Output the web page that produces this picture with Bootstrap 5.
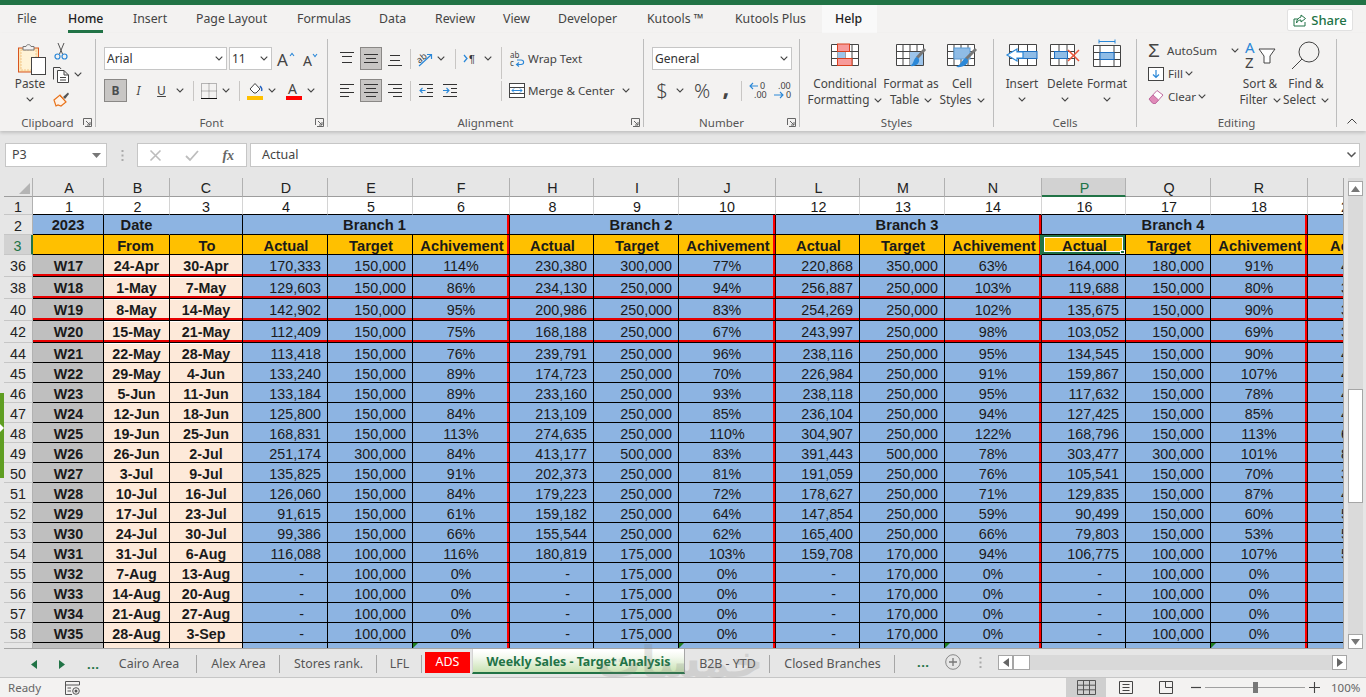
<!DOCTYPE html>
<html lang="en">
<head>
<meta charset="utf-8">
<title>Weekly Sales - Target Analysis</title>
<link href="https://cdn.jsdelivr.net/npm/bootstrap@5.3.0/dist/css/bootstrap.min.css" rel="stylesheet">
<style>
html,body{height:697px;overflow:hidden}
body{width:1366px;background:#f3f2f1;font-family:"Noto Sans","Open Sans",sans-serif;font-size:12px;color:#444;position:relative}
svg{overflow:visible}
.topbar{height:5px;background:#217346}
.tabstrip{height:28px;background:#f3f2f1;display:grid;grid-template-columns:51px 65px 63px 101px 82px 56px 68px 55px 89px 88px 100px 57px 1fr;padding-left:17px;font-size:12.3px;color:#444;white-space:nowrap;line-height:27px}
.hometab{display:inline-block;height:28px;border-bottom:3px solid #217346;color:#222;font-weight:500}
.helptab{margin-left:-13px;padding-left:13px;width:55px;background:#f9f9f9;color:#222;font-weight:500}
.sharebtn{grid-column:13;grid-row:1;justify-self:end;width:66px;height:22px;margin:4px 13px 0 0;background:#fff;border:1px solid #e1e1e1;border-radius:2px;color:#217346;font-weight:500;font-size:13px;line-height:20px}
.rbn{height:98px;background:#f3f2f1;display:flex;position:relative;z-index:2;box-shadow:0 2px 3px rgba(0,0,0,.16)}
.grp{margin-top:6px;height:88px;border-right:1px solid #bdbdbd;flex:none;position:relative;display:flex;flex-direction:column}
.g-clip{width:96px}.g-font{width:232px}.g-align{width:316px}.g-num{width:156px}.g-sty{width:194px}.g-cell{width:143px}.g-edit{width:200px}
.g-main{height:76px;flex:none;display:flex}
.g-lab{line-height:16px;text-align:center;font-size:11.5px;color:#555;white-space:nowrap}
.launch{position:absolute;right:3px;bottom:0;width:9px;height:9px}
.rows2{padding-top:8px;display:flex;flex-direction:column;gap:9px}
.g-font .rows2{padding-left:8px}.g-num .rows2{padding-left:8px}
.tr{display:flex;align-items:center;height:23px;white-space:nowrap}
.tool{display:flex;align-items:center;justify-content:center;flex:none;height:23px}
.tool.on{background:#c8c6c4;border:1px solid #8a8886}
.vsep{width:1px;height:20px;background:#c8c6c4;flex:none}
.vsep.lng{height:32px;align-self:flex-start}
.s2{width:2px;flex:none}.s3{width:3px;flex:none}.s4{width:4px;flex:none}.s5{width:5px;flex:none}.s6{width:6px;flex:none}.s7{width:7px;flex:none}.s8{width:8px;flex:none}.s9{width:9px;flex:none}.s10{width:10px;flex:none}.s14{width:14px;flex:none}.s16{width:16px;flex:none}.s18{width:18px;flex:none}.s20{width:20px;flex:none}.s21{width:21px;flex:none}.s22{width:22px;flex:none}.s23{width:23px;flex:none}.s44{width:44px;flex:none}.s93{width:93px;flex:none}.s123{width:123px;flex:none}.s43{width:43px;flex:none}.s140{width:140px;flex:none}.s15{width:15px;flex:none}.s13{width:13px;flex:none}.s11{width:11px;flex:none}.s40{width:40px;flex:none}.s100{width:100px;flex:none}
.combo{height:23px;background:#fff;border:1px solid #c6c6c6;display:flex;align-items:center;justify-content:space-between;padding:0 3px 0 2px;color:#333;font-size:12px}
.cv{width:8px;height:5px;display:block;flex:none}
.lbl{font-size:11.6px;color:#444;white-space:nowrap}
.bigrow{display:grid;width:100%}
.g-sty .bigrow{grid-template-columns:90px 42px 60px}
.g-cell .bigrow{grid-template-columns:56px 30px 54px}
.bigb{display:flex;flex-direction:column;align-items:center;white-space:nowrap;line-height:16px;font-size:11.8px;color:#444}
.bigb-ic{height:36px;flex:none;display:flex;align-items:flex-start;justify-content:center;padding-top:4px}
.bigb .cv{margin-top:6px}
.inl{display:inline-block;width:8px;height:5px;margin-left:2px;vertical-align:middle}
.clip-big{width:46px;margin-left:7px;flex:none}
.clip-small{padding-top:2px;display:flex;flex-direction:column;gap:5px}
.clip-small>div{height:19px;display:flex;align-items:center}
.edit-left{width:103px;flex:none;padding:1px 0 0 11px;display:flex;flex-direction:column;gap:2px}
.edit-left>div{height:21px;display:flex;align-items:center;white-space:nowrap}
.sigma{font-size:19px;color:#444;width:19px;line-height:20px;font-family:"Liberation Sans",sans-serif}
.tail{flex:1;position:relative}
.upcv{position:absolute;right:9px;bottom:7px;width:10px;height:6px}
.fbar{height:47px;background:#e6e6e6;padding:12px 6px 11px 5px;display:flex;align-items:stretch;font-size:12.5px;color:#444}
.namebox{width:102px;background:#fff;border:1px solid #c6c6c6;display:flex;align-items:center;justify-content:space-between;padding:0 5px 0 6px}
.namebox svg{width:9px;height:5px}
.fdots{width:30px;display:flex;align-items:center;justify-content:center}
.fxbox{width:110px;background:#fff;border:1px solid #c6c6c6;display:flex;align-items:center;justify-content:space-around;padding:0}
.fxlab{font-family:"Liberation Serif",serif;font-style:italic;font-weight:700;font-size:14px;color:#666}
.finput{flex:1;margin-left:3px;background:#fff;border:1px solid #c6c6c6;display:flex;align-items:center;justify-content:space-between;padding:0 3px 0 11px}
.gridzone{height:471px;display:flex;background:#e6e6e6}
.lstrip{width:4px;flex:none;padding-top:215px}
.lgreen{height:85px;background:#5f9e22;display:flex;align-items:center}
.lgreen svg{width:4px;height:8px;margin-top:-16px}
.sheetclip{width:1340px;flex:none;overflow:hidden;border-right:1px solid #a6a6a6;border-bottom:1px solid #a6a6a6;background:#fff}
.xl{table-layout:fixed;border-collapse:separate;border-spacing:0;width:1392px;font-family:"Liberation Sans",Arial,sans-serif;font-size:14.3px;color:#1a1a1a;line-height:14px}
.xl td,.xl th{padding:3px 6px 0 4px;height:20px;border-right:1px solid #000;border-bottom:1px solid #000;background:#8db4e2;text-align:right;font-weight:400;white-space:nowrap;overflow:hidden}
.xl td.cn{text-align:center;padding-right:4px}
.xl td.dash{padding-right:23px}
.xl td.wk{background:#bfbfbf;font-weight:700;text-align:center;padding-left:5px;padding-right:4px}
.xl td.pch{background:#fde9d9;font-weight:700;text-align:center;padding-right:4px}
.xl td.og{background:#ffc000;font-weight:700;text-align:center;font-size:14.7px;padding-left:6px;padding-right:4px}
.xl td.og:nth-child(3){padding-left:2px}
.xl td.bh{font-weight:700;text-align:center;font-size:14.7px;padding-right:4px;padding-top:0}
.xl td.bh.rv{padding-right:7px}
.xl td.peek{text-align:left;padding-left:33px}
.xl tr.hr>*{height:22px}
.xl tr.hr td{padding-top:0}
.xl .rv{box-shadow:inset -2px 0 0 #f00;border-right-color:#300}
.xl tr.hr td{box-shadow:inset 0 -2px 0 #e80000;border-bottom-color:#000}
.xl tr.hr td.rv{box-shadow:inset 0 -2px 0 #e80000,inset -2px 0 0 #f00}
.xl tr.hr+tr td.pch{box-shadow:inset 0 1px 0 #fff}
.xl tr.hr+tr.hr td.pch{box-shadow:inset 0 1px 0 #fff,inset 0 -2px 0 #e80000}
.xl th.rh,.xl th.ch{background:#e6e6e6;color:#222;text-align:center;border-right:1px solid #b1b1b1;border-bottom:1px solid #c6c6c6;padding:3px 0 0}
.xl tr.hr th.rh{padding-top:0}
.xl thead th.ch{height:19px;border-bottom-color:#9d9d9d;padding-top:2px}
.xl thead th.ch:not(:nth-child(3n+1)){padding-left:2px}
.xl th.sel{background:#d2d2d2;color:#217346}
.xl thead th.sel{border-bottom:2px solid #217346}
.xl th.rh.sel{border-right:2px solid #217346}
.xl th.corner{position:relative}
.xl th.corner::after{content:"";position:absolute;right:2px;bottom:2px;border-style:solid;border-width:0 0 11px 11px;border-color:transparent transparent #b4b4b4 transparent}
.xl tr.r1 td{background:#fff;height:18px;text-align:center;border-right-color:#d4d4d4;padding:3px 4px 0}
.xl tr.r1 td:not(:nth-child(3n+1)){padding-left:6px}
.xl tr.r1 td.peek{text-align:left;padding-left:33px}
.xl tr.r1 th.rh{height:18px}
.xl td.nob{border-right-color:transparent}
.xl td.cur{position:relative;box-shadow:inset 0 0 0 2px #217346,inset 0 0 0 3px #fff,-2px 0 0 #217346}
.xl td.cur::after{content:"";position:absolute;right:0;bottom:0;width:5px;height:4px;background:#217346;border:1px solid #fff}
.xl td.err{position:relative}
.xl td.err::before{content:"";position:absolute;left:0;top:0;border-style:solid;border-width:5px 5px 0 0;border-color:#1e7d1e transparent transparent transparent}
.vs{width:22px;flex:none;padding:0 3px 0 4px;display:flex;justify-content:center}
.vs-in{width:15px;background:#dadada;display:flex;flex-direction:column;align-items:center;padding-top:3px}
.sb{width:15px;height:15px;background:#fff;border:1px solid #a6a6a6;flex:none;display:flex;align-items:center;justify-content:center}
.sb svg{width:9px;height:6px}
.vthumb{width:15px;height:114px;margin-top:193px;background:#fff;border:1px solid #a6a6a6;flex:none}
.vend{margin-top:auto}
.sheetbar{height:29px;background:#e6e6e6;border-bottom:1px solid #c6c6c6;display:grid;grid-template-columns:105px 92px 83px 97px 45px 3px 45px 2px 213px 85px 125px 1fr;font-size:12.4px;color:#555;white-space:nowrap}
.stab{display:flex;align-items:center;justify-content:center;position:relative;height:28px;padding-top:2px}
.stab.sp::after{content:"";position:absolute;right:0;top:6px;height:18px;width:1px;background:#a6a6a6}
.navz{display:flex;align-items:center;padding-left:31px;justify-content:flex-start}
.navz svg{width:6px;height:9px}
.gdots{color:#217346;font-weight:700;font-size:13px;line-height:14px;letter-spacing:.5px}
.s-ads{background:#f00;color:#fff;margin-top:3px;height:21px;padding-top:0}
.s-act{background:linear-gradient(#fff 8%,#f4f9ef 35%,#c9e2b3);color:#217346;font-weight:700;height:25px;border-bottom:2px solid #217346;border-left:1px solid #d4d4d4;border-right:1px solid #a6a6a6;padding-top:3px}
.stail{display:flex;align-items:center;height:28px;padding-top:0;padding-bottom:2px}
.hs{width:349px;height:15px;flex:none;background:#d9d9d9;display:flex}
.hs .sb{width:15px}
.hs .sb svg{width:6px;height:9px}
.hthumb{width:17px;height:15px;background:#fff;border:1px solid #a6a6a6;flex:none}
.hend{margin-left:auto}
.statusb{height:19px;background:#f3f2f1;display:flex;align-items:center;padding-left:8px;color:#666;font-size:11.5px;white-space:nowrap;line-height:19px}
.sviews{margin-left:auto;display:flex;align-items:center;height:19px}
.vw{height:19px;width:40px;display:flex;align-items:center;justify-content:center;flex:none}
.vw.on{background:#cfcfcf}
.slid{width:100px;height:1px;background:#a0a0a0;position:relative;flex:none}
.slid::after{content:"";position:absolute;left:48px;top:-5px;width:5px;height:11px;background:#777}
.pctz{width:35px;color:#666;font-size:11.5px}
.wmark{position:absolute;left:590px;top:640px;width:180px;text-align:center;font-family:"DejaVu Sans",sans-serif;font-weight:700;font-size:44px;line-height:44px;color:#7c7c7c;opacity:.2;pointer-events:none;z-index:5}
</style>
</head>
<body>
<svg width="0" height="0" class="d-block">
<defs>
<symbol id="cv" viewBox="0 0 8 5"><path d="M.7.7 4 4 7.3.7" fill="none" stroke="#444" stroke-width="1.1"/></symbol>
<symbol id="lch" viewBox="0 0 9 9"><path d="M.5 7V.5H8.5V8.5H2M3 3 7 7M7 4V7H4" fill="none" stroke="#666"/></symbol>
<symbol id="altop" viewBox="0 0 14 18"><path d="M0 2.5H14M2 6.5H12M0 11.5H0" stroke="#333" fill="none"/><path d="M2 12.5H12" stroke="#333"/></symbol>
<symbol id="almid" viewBox="0 0 14 18"><path d="M0 4.5H14M2 8.5H12M0 12.5H14" stroke="#333" fill="none"/></symbol>
<symbol id="albot" viewBox="0 0 14 18"><path d="M2 5.5H12M2 10.5H12M0 15.5H14" stroke="#333" fill="none"/></symbol>
<symbol id="alleft" viewBox="0 0 14 14"><path d="M0 .5H14M0 4.5H9M0 8.5H14M0 12.5H9" stroke="#333" fill="none"/></symbol>
<symbol id="alcen" viewBox="0 0 14 14"><path d="M0 .5H14M2 4.5H12M0 8.5H14M2 12.5H12" stroke="#333" fill="none"/></symbol>
<symbol id="alright" viewBox="0 0 14 14"><path d="M0 .5H14M5 4.5H14M0 8.5H14M5 12.5H14" stroke="#333" fill="none"/></symbol>
<symbol id="tl" viewBox="0 0 6 9"><path d="M6 0V9L0 4.5Z"/></symbol>
<symbol id="tr" viewBox="0 0 6 9"><path d="M0 0V9L6 4.5Z"/></symbol>
<symbol id="tu" viewBox="0 0 9 6"><path d="M0 6H9L4.5 0Z" fill="#777"/></symbol>
<symbol id="td" viewBox="0 0 9 6"><path d="M0 0H9L4.5 6Z" fill="#777"/></symbol>
</defs>
</svg>

<div class="topbar"></div>

<div class="tabstrip">
<span>File</span><span><span class="hometab">Home</span></span><span>Insert</span><span>Page Layout</span><span>Formulas</span><span>Data</span><span>Review</span><span>View</span><span>Developer</span><span>Kutools ™</span><span>Kutools Plus</span><span class="helptab">Help</span><span>Power Pivot</span>
<div class="sharebtn d-flex align-items-center justify-content-center gap-1">
<svg width="14" height="14" viewBox="0 0 14 14"><path d="M1 6V13H12V9M1 6H5M8 2 12.5 5.5 8 9V7C6 7 4.5 8 3.5 10 3.5 7 5.5 4.5 8 4Z" fill="none" stroke="#217346"/></svg>Share</div>
</div>

<div class="rbn">
<!-- Clipboard -->
<div class="grp g-clip">
<div class="g-main">
<div class="clip-big bigb">
<div class="bigb-ic ps-1">
<svg width="28" height="32" viewBox="0 0 28 32"><rect x=".5" y="5" width="20" height="24" fill="#fbe6b8" stroke="#d8551f"/><rect x="3" y="7" width="15" height="20" fill="#fff3d6" stroke="#f3c78a" stroke-dasharray="2 1"/><path d="M5 7V3.5H8C8.5 1 12.5 1 13 3.5H16V7Z" fill="#f3f2f1" stroke="#777"/><rect x="13.5" y="14.5" width="14" height="17" fill="#fff" stroke="#444"/></svg>
</div>
<span>Paste</span><svg class="cv"><use href="#cv"/></svg>
</div>
<div class="clip-small">
<div><svg width="16" height="18" viewBox="0 0 16 18"><path d="M5 1 9.5 12M11 1 6.5 12" stroke="#555" fill="none"/><circle cx="4.5" cy="14.5" r="2.5" fill="none" stroke="#2b88d8" stroke-width="1.2"/><circle cx="11.5" cy="14.5" r="2.5" fill="none" stroke="#2b88d8" stroke-width="1.2"/></svg></div>
<div><svg width="16" height="16" viewBox="0 0 16 16"><path d="M.5 12.5V.5H7L8 2" fill="none" stroke="#444"/><path d="M4.5 3.5H11L15.5 8V15.5H4.5ZM11 3.5V8H15.5M7 10.5H13M7 13H13" fill="#fff" stroke="#444"/></svg><span class="s5"></span><svg class="cv"><use href="#cv"/></svg></div>
<div><svg width="17" height="16" viewBox="0 0 17 16"><path d="M1 9 7 4 13 11 8 15 5 14 3 15 2 12Z" fill="#fff2e6" stroke="#e8731c" stroke-width="1.2"/><path d="M7 5 12 10" stroke="#e8731c"/><path d="M10 6 15 1.5 16 3 12 8Z" fill="#555"/></svg></div>
</div>
</div>
<div class="g-lab">Clipboard</div>
<svg class="launch"><use href="#lch"/></svg>
</div>

<!-- Font -->
<div class="grp g-font">
<div class="g-main">
<div class="rows2">
<div class="tr">
<div class="combo s123"><span>Arial</span><svg class="cv"><use href="#cv"/></svg></div><span class="s2"></span>
<div class="combo s43"><span>11</span><svg class="cv"><use href="#cv"/></svg></div><span class="s5"></span>
<div class="tool s20"><svg width="20" height="20" viewBox="0 0 20 20"><text x="0" y="17" font-family="Noto Sans,sans-serif" font-size="17" fill="#444">A</text><path d="M13 7 15 4.5 17 7" fill="none" stroke="#2b88d8" stroke-width="1.1"/></svg></div><span class="s3"></span>
<div class="tool s20"><svg width="20" height="20" viewBox="0 0 20 20"><text x="3" y="17" font-family="Noto Sans,sans-serif" font-size="14" fill="#444">A</text><path d="M13 5 15 7.5 17 5" fill="none" stroke="#2b88d8" stroke-width="1.1"/></svg></div>
</div>
<div class="tr">
<div class="tool s23 on"><b class="text-body-secondary">B</b></div>
<div class="tool s23"><i>I</i></div>
<div class="tool s23"><span class="text-decoration-underline">U</span></div>
<div class="tool s14"><svg class="cv"><use href="#cv"/></svg></div><span class="s6"></span><span class="vsep"></span><span class="s7"></span>
<div class="tool s16"><svg width="16" height="16" viewBox="0 0 16 16"><path d="M.5.5H15.5V15.5H.5ZM8 .5V15.5M.5 8H15.5" fill="none" stroke="#777" stroke-dasharray="1 1"/><path d="M0 15.5H16" stroke="#111"/></svg></div><span class="s4"></span>
<div class="tool s10"><svg class="cv"><use href="#cv"/></svg></div><span class="s8"></span><span class="vsep"></span><span class="s6"></span>
<div class="tool s18"><svg width="16" height="19" viewBox="0 0 16 19"><path d="M3 8 8 2.5 13 8 9 12H7Z" fill="#fff" stroke="#444"/><path d="M13 5C15 7 15 9 14.500 10" stroke="#1f5fbf" stroke-width="1.4" fill="none"/><rect y="15" width="16" height="4" fill="#ffc000"/></svg></div><span class="s4"></span>
<div class="tool s8"><svg class="cv"><use href="#cv"/></svg></div><span class="s9"></span>
<div class="tool s18"><svg width="16" height="19" viewBox="0 0 16 19"><text x="2" y="13" font-family="Noto Sans,sans-serif" font-size="14" fill="#444">A</text><rect y="15" width="16" height="4" fill="#f00"/></svg></div><span class="s4"></span>
<div class="tool s8"><svg class="cv"><use href="#cv"/></svg></div>
</div>
</div>
</div>
<div class="g-lab">Font</div>
<svg class="launch"><use href="#lch"/></svg>
</div>

<!-- Alignment -->
<div class="grp g-align">
<div class="g-main">
<div class="rows2 ps-2">
<div class="tr">
<div class="tool s22"><svg width="14" height="18"><use href="#altop"/></svg></div><span class="s2"></span>
<div class="tool s22 on"><svg width="14" height="18"><use href="#almid"/></svg></div><span class="s6"></span>
<div class="tool s14"><svg width="14" height="18"><use href="#albot"/></svg></div><span class="s8"></span><span class="vsep"></span><span class="s7"></span>
<div class="tool s14"><svg width="16" height="18" viewBox="0 0 16 18"><text x="0" y="11" font-family="Noto Sans,sans-serif" font-size="9" fill="#444" transform="rotate(-38 5 9)">ab</text><path d="M2 16 14 5M10 4.500H14.500V9" fill="none" stroke="#2b88d8" stroke-width="1.2"/></svg></div><span class="s4"></span>
<div class="tool s10"><svg class="cv"><use href="#cv"/></svg></div><span class="s9"></span><span class="vsep"></span><span class="s8"></span>
<div class="tool s14"><svg width="14" height="14" viewBox="0 0 14 14"><path d="M0 3 3 6.500 0 10" fill="none" stroke="#2b88d8" stroke-width="1.3"/><text x="5" y="11" font-family="Liberation Sans,sans-serif" font-size="11" fill="#333">¶</text></svg></div><span class="s5"></span>
<div class="tool s10"><svg class="cv"><use href="#cv"/></svg></div><span class="s8"></span><span class="vsep lng"></span><span class="s8"></span>
<div class="tool s16"><svg width="16" height="16" viewBox="0 0 16 16"><text x="0" y="7" font-family="Noto Sans,sans-serif" font-size="8" fill="#444">ab</text><text x="0" y="15" font-family="Noto Sans,sans-serif" font-size="8" fill="#444">c</text><path d="M7 13.500H11C14.500 13.500 14.500 9 11 9H7M9 11.500 6.500 13.500 9 15.500" fill="none" stroke="#2b88d8" stroke-width="1.1"/></svg></div><span class="s2"></span>
<span class="lbl">Wrap Text</span>
</div>
<div class="tr">
<div class="tool s22"><svg width="14" height="14"><use href="#alleft"/></svg></div><span class="s2"></span>
<div class="tool s22 on"><svg width="14" height="14"><use href="#alcen"/></svg></div><span class="s6"></span>
<div class="tool s14"><svg width="14" height="14"><use href="#alright"/></svg></div><span class="s8"></span><span class="vsep"></span><span class="s8"></span>
<div class="tool s14"><svg width="14" height="14" viewBox="0 0 14 14"><path d="M0 .5H14M8 4.500H14M8 8.500H14M0 12.500H14" stroke="#333"/><path d="M6.500 6.500H1M3.500 4 1 6.500 3.500 9" fill="none" stroke="#2b88d8" stroke-width="1.1"/></svg></div><span class="s10"></span>
<div class="tool s14"><svg width="14" height="14" viewBox="0 0 14 14"><path d="M0 .5H14M8 4.500H14M8 8.500H14M0 12.500H14" stroke="#333"/><path d="M0 6.500H6M3.500 4 6 6.500 3.500 9" fill="none" stroke="#2b88d8" stroke-width="1.1"/></svg></div><span class="s44"></span>
<span class="vsep"></span><span class="s7"></span>
<div class="tool s16"><svg width="16" height="15" viewBox="0 0 16 15"><rect x=".5" y=".5" width="15" height="14" fill="#fff" stroke="#444"/><path d="M.5 4.500H15.500M.5 10.500H15.500" stroke="#444"/><rect x="1" y="5" width="14" height="5" fill="#fff"/><path d="M3 7.500H13M5 5.500 3 7.500 5 9.500M11 5.500 13 7.500 11 9.500" fill="none" stroke="#2b88d8"/></svg></div><span class="s3"></span>
<span class="lbl s93">Merge &amp; Center</span>
<div class="tool s10"><svg class="cv"><use href="#cv"/></svg></div>
</div>
</div>
</div>
<div class="g-lab">Alignment</div>
<svg class="launch"><use href="#lch"/></svg>
</div>

<!-- Number -->
<div class="grp g-num">
<div class="g-main">
<div class="rows2">
<div class="tr"><div class="combo s140"><span>General</span><svg class="cv"><use href="#cv"/></svg></div></div>
<div class="tr">
<div class="tool s20 fs-5 fw-light">$</div><span class="s4"></span>
<div class="tool s8"><svg class="cv"><use href="#cv"/></svg></div><span class="s8"></span>
<div class="tool s20 fs-5 fw-light">%</div><span class="s4"></span>
<div class="tool s20 fs-4 fw-bold pb-2">,</div><span class="s5"></span><span class="vsep"></span><span class="s7"></span>
<div class="tool s21"><svg width="21" height="17" viewBox="0 0 21 17"><text x="11" y="7" font-family="Noto Sans,sans-serif" font-size="9" fill="#444">0</text><text x="5" y="16" font-family="Noto Sans,sans-serif" font-size="9" fill="#444">.00</text><path d="M9 4H1M4 1 1 4 4 7" fill="none" stroke="#2b88d8" stroke-width="1.1"/></svg></div><span class="s3"></span>
<div class="tool s21"><svg width="21" height="17" viewBox="0 0 21 17"><text x="5" y="7" font-family="Noto Sans,sans-serif" font-size="9" fill="#444">.00</text><text x="13" y="16" font-family="Noto Sans,sans-serif" font-size="9" fill="#444">0</text><path d="M1 13H10M7 10 10 13 7 16" fill="none" stroke="#2b88d8" stroke-width="1.1"/></svg></div>
</div>
</div>
</div>
<div class="g-lab">Number</div>
<svg class="launch"><use href="#lch"/></svg>
</div>

<!-- Styles -->
<div class="grp g-sty">
<div class="g-main"><div class="bigrow">
<div class="bigb">
<div class="bigb-ic"><svg width="28" height="23" viewBox="0 0 28 23"><path d="M.5 1.500H27.500V22.500H.5ZM.5 8.500H27.500M.5 15.500H27.500M7 1.500V22.500M14 1.500V22.500M21 1.500V22.500" fill="#fff" stroke="#444"/><rect x="6.500" y="1" width="12" height="7.500" fill="#f79a9a" stroke="#d8401f"/><rect x="7" y="9" width="7" height="6" fill="#9cc4ea"/><rect x="6.500" y="15.500" width="14.500" height="7" fill="#f79a9a" stroke="#d8401f"/></svg></div>
<span>Conditional</span><span>Formatting <svg class="inl"><use href="#cv"/></svg></span>
</div>
<div class="bigb">
<div class="bigb-ic"><svg width="30" height="25" viewBox="0 0 30 25"><path d="M.5 1.500H27.500V22.500H.5ZM.5 8.500H27.500M.5 15.500H27.500M7 1.500V22.500M14 1.500V22.500M21 1.500V22.500" fill="#fff" stroke="#444"/><rect x="14" y="9" width="13" height="13" fill="#9cc4ea"/><path d="M29 6 21 15" stroke="#777" stroke-width="3"/><path d="M21 14C17 15 19 20 14 23 20 24 24 20 23 16Z" fill="#2b88d8"/></svg></div>
<span>Format as</span><span>Table <svg class="inl"><use href="#cv"/></svg></span>
</div>
<div class="bigb">
<div class="bigb-ic"><svg width="30" height="25" viewBox="0 0 30 25"><path d="M.5 1.500H27.500V22.500H.5ZM.5 8.500H27.500M.5 15.500H27.500M7 1.500V22.500M14 1.500V22.500M21 1.500V22.500" fill="#fff" stroke="#444"/><rect x="7" y="5" width="16" height="11" fill="#8fbce6" stroke="#5a9bd5"/><path d="M29 6 19 16" stroke="#777" stroke-width="3"/><path d="M19 15C15 16 15 21 9 24 16 25 22 21 21 17Z" fill="#2b88d8"/></svg></div>
<span>Cell</span><span>Styles <svg class="inl"><use href="#cv"/></svg></span>
</div>
</div></div>
<div class="g-lab">Styles</div>
</div>

<!-- Cells -->
<div class="grp g-cell">
<div class="g-main"><div class="bigrow">
<div class="bigb">
<div class="bigb-ic"><svg width="32" height="23" viewBox="0 0 32 23"><path d="M3.500 1.500H30.500V22.500H3.500ZM3.500 8.500H30.500M3.500 15.500H30.500M12.500 1.500V22.500M21.500 1.500V22.500" fill="#fff" stroke="#444"/><rect x="12" y="8.500" width="19" height="7" fill="#8fbce6" stroke="#1f6fc0"/><path d="M11 6 1 12 11 18V15H17V9H11Z" fill="#fff" stroke="#2b88d8" stroke-width="1.2"/></svg></div>
<span>Insert</span><svg class="cv"><use href="#cv"/></svg>
</div>
<div class="bigb">
<div class="bigb-ic"><svg width="30" height="23" viewBox="0 0 30 23"><path d="M.5 1.500H24.500V22.500H.5ZM.5 8.500H24.500M.5 15.500H24.500M9 1.500V22.500M17 1.500V22.500" fill="#fff" stroke="#444"/><rect x="4.500" y="8.500" width="13" height="7" fill="#8fbce6" stroke="#1f6fc0"/><path d="M18 7 29 18M29 7 18 18" stroke="#e8553a" stroke-width="1.5"/></svg></div>
<span>Delete</span><svg class="cv"><use href="#cv"/></svg>
</div>
<div class="bigb">
<div class="bigb-ic pt-0"><svg width="29" height="28" viewBox="0 0 29 28"><path d="M6 2.500H22M6 .5V4.500M22 .5V4.500" stroke="#2b88d8" fill="none"/><path d="M.5 6.500H27.500V27.500H.5ZM.5 13.500H27.500M.5 20.500H27.500M7 6.500V27.500M21 6.500V27.500" fill="#fff" stroke="#444"/><rect x="7" y="13.500" width="14" height="7" fill="#8fbce6" stroke="#1f6fc0"/></svg></div>
<span>Format</span><svg class="cv"><use href="#cv"/></svg>
</div>
</div></div>
<div class="g-lab">Cells</div>
</div>

<!-- Editing -->
<div class="grp g-edit">
<div class="g-main">
<div class="edit-left">
<div><span class="sigma">Σ</span><span class="lbl">AutoSum</span><span class="s14"></span><svg class="cv"><use href="#cv"/></svg></div>
<div><svg width="16" height="14" viewBox="0 0 16 14" class="me-1"><rect x=".5" y=".5" width="15" height="13" fill="#fff" stroke="#444"/><path d="M8 3V10M5 7.500 8 10.500 11 7.500" fill="none" stroke="#2b88d8" stroke-width="1.2"/></svg><span class="lbl">Fill</span><svg class="inl"><use href="#cv"/></svg></div>
<div><svg width="16" height="16" viewBox="0 0 16 16" class="me-1"><path d="M1 10 9 1.500 15 6 7.500 14.500H5Z" fill="#fff" stroke="#c06ca0"/><path d="M1 10 5 6 10.500 11 7.500 14.500H5Z" fill="#e08ab8" stroke="#c06ca0"/></svg><span class="lbl">Clear</span><svg class="inl"><use href="#cv"/></svg></div>
</div>
<div class="bigb s40">
<div class="bigb-ic pt-0"><svg width="32" height="32" viewBox="0 0 32 32"><text x="1" y="14" font-family="Noto Sans,sans-serif" font-size="15" fill="#2b88d8">A</text><text x="1" y="29" font-family="Noto Sans,sans-serif" font-size="15" fill="#444">Z</text><path d="M15 10H31L26 17V24L20 24V17Z" fill="#fff" stroke="#444"/></svg></div>
<span>Sort &amp;</span><span>Filter <svg class="inl"><use href="#cv"/></svg></span>
</div>
<div class="bigb ms-1 s44">
<div class="bigb-ic pt-0"><svg width="32" height="32" viewBox="0 0 32 32"><circle cx="19" cy="13" r="10" fill="none" stroke="#444"/><path d="M12 20 2 30" stroke="#444"/></svg></div>
<span>Find &amp;</span><span>Select <svg class="inl"><use href="#cv"/></svg></span>
</div>
</div>
<div class="g-lab">Editing</div>
</div>
<div class="tail"><svg class="upcv" viewBox="0 0 10 6"><path d="M.5 5.500 5 1 9.500 5.500" fill="none" stroke="#444"/></svg></div>
</div>

<div class="fbar">
<div class="namebox"><span>P3</span><svg viewBox="0 0 9 5"><path d="M0 0H9L4.500 5Z" fill="#777"/></svg></div>
<div class="fdots"><svg width="3" height="11" viewBox="0 0 3 11"><path d="M1.500 0V2M1.500 4.500V6.500M1.500 9V11" stroke="#aaa" stroke-width="2"/></svg></div>
<div class="fxbox">
<svg width="11" height="11" viewBox="0 0 11 11"><path d="M.5.5 10.500 10.500M10.500.5 .5 10.500" stroke="#bdbdbd" stroke-width="1.6"/></svg>
<svg width="14" height="11" viewBox="0 0 14 11"><path d="M1 6 5 10 13 1" fill="none" stroke="#bdbdbd" stroke-width="1.8"/></svg>
<span class="fxlab">fx</span>
</div>
<div class="finput"><span>Actual</span><svg width="9" height="6" viewBox="0 0 9 6"><path d="M.5.5 4.500 4.500 8.500.5" fill="none" stroke="#555" stroke-width="1.500"/></svg></div>
</div>

<div class="gridzone">
<div class="lstrip"><div class="lgreen"><svg viewBox="0 0 4 8"><path d="M0 0 4 4 0 8Z" fill="#fff"/></svg></div></div>
<div class="sheetclip">
<table class="xl">
<colgroup><col width="29"><col width="71"><col width="66"><col width="73"><col width="85"><col width="85"><col width="97"><col width="84"><col width="85"><col width="97"><col width="84"><col width="85"><col width="97"><col width="84"><col width="85"><col width="97"><col width="88"></colgroup>
<thead><tr><th class="ch corner"></th><th class="ch">A</th><th class="ch">B</th><th class="ch">C</th><th class="ch">D</th><th class="ch">E</th><th class="ch">F</th><th class="ch">H</th><th class="ch">I</th><th class="ch">J</th><th class="ch">L</th><th class="ch">M</th><th class="ch">N</th><th class="ch sel">P</th><th class="ch">Q</th><th class="ch">R</th><th class="ch"></th></tr></thead>
<tbody>
<tr class="r1"><th class="rh">1</th><td>1</td><td>2</td><td>3</td><td>4</td><td>5</td><td>6</td><td>8</td><td>9</td><td>10</td><td>12</td><td>13</td><td>14</td><td>16</td><td>17</td><td>18</td><td class="peek">2</td></tr>
<tr><th class="rh">2</th><td class="bh">2023</td><td class="bh nob">Date</td><td></td><td class="bh rv" colspan="3">Branch 1</td><td class="bh rv" colspan="3">Branch 2</td><td class="bh rv" colspan="3">Branch 3</td><td class="bh rv" colspan="3">Branch 4</td><td></td></tr>
<tr><th class="rh sel">3</th><td class="og"></td><td class="og">From</td><td class="og">To</td><td class="og">Actual</td><td class="og">Target</td><td class="og rv">Achivement</td><td class="og">Actual</td><td class="og">Target</td><td class="og rv">Achivement</td><td class="og">Actual</td><td class="og">Target</td><td class="og rv">Achivement</td><td class="og cur">Actual</td><td class="og">Target</td><td class="og rv">Achivement</td><td class="og">Actual</td></tr>
<tr class="hr"><th class="rh">36</th><td class="wk">W17</td><td class="pch">24-Apr</td><td class="pch">30-Apr</td><td>170,333</td><td>150,000</td><td class="cn rv">114%</td><td>230,380</td><td>300,000</td><td class="cn rv">77%</td><td>220,868</td><td>350,000</td><td class="cn rv">63%</td><td>164,000</td><td>180,000</td><td class="cn rv">91%</td><td class="peek">4</td></tr>
<tr class="hr"><th class="rh">38</th><td class="wk">W18</td><td class="pch">1-May</td><td class="pch">7-May</td><td>129,603</td><td>150,000</td><td class="cn rv">86%</td><td>234,130</td><td>250,000</td><td class="cn rv">94%</td><td>256,887</td><td>250,000</td><td class="cn rv">103%</td><td>119,688</td><td>150,000</td><td class="cn rv">80%</td><td class="peek">3</td></tr>
<tr class="hr"><th class="rh">40</th><td class="wk">W19</td><td class="pch">8-May</td><td class="pch">14-May</td><td>142,902</td><td>150,000</td><td class="cn rv">95%</td><td>200,986</td><td>250,000</td><td class="cn rv">83%</td><td>254,269</td><td>250,000</td><td class="cn rv">102%</td><td>135,675</td><td>150,000</td><td class="cn rv">90%</td><td class="peek">3</td></tr>
<tr class="hr"><th class="rh">42</th><td class="wk">W20</td><td class="pch">15-May</td><td class="pch">21-May</td><td>112,409</td><td>150,000</td><td class="cn rv">75%</td><td>168,188</td><td>250,000</td><td class="cn rv">67%</td><td>243,997</td><td>250,000</td><td class="cn rv">98%</td><td>103,052</td><td>150,000</td><td class="cn rv">69%</td><td class="peek">3</td></tr>
<tr><th class="rh">44</th><td class="wk">W21</td><td class="pch">22-May</td><td class="pch">28-May</td><td>113,418</td><td>150,000</td><td class="cn rv">76%</td><td>239,791</td><td>250,000</td><td class="cn rv">96%</td><td>238,116</td><td>250,000</td><td class="cn rv">95%</td><td>134,545</td><td>150,000</td><td class="cn rv">90%</td><td class="peek">4</td></tr>
<tr><th class="rh">45</th><td class="wk">W22</td><td class="pch">29-May</td><td class="pch">4-Jun</td><td>133,240</td><td>150,000</td><td class="cn rv">89%</td><td>174,723</td><td>250,000</td><td class="cn rv">70%</td><td>226,984</td><td>250,000</td><td class="cn rv">91%</td><td>159,867</td><td>150,000</td><td class="cn rv">107%</td><td class="peek">4</td></tr>
<tr><th class="rh">46</th><td class="wk">W23</td><td class="pch">5-Jun</td><td class="pch">11-Jun</td><td>133,184</td><td>150,000</td><td class="cn rv">89%</td><td>233,160</td><td>250,000</td><td class="cn rv">93%</td><td>238,118</td><td>250,000</td><td class="cn rv">95%</td><td>117,632</td><td>150,000</td><td class="cn rv">78%</td><td class="peek">4</td></tr>
<tr><th class="rh">47</th><td class="wk">W24</td><td class="pch">12-Jun</td><td class="pch">18-Jun</td><td>125,800</td><td>150,000</td><td class="cn rv">84%</td><td>213,109</td><td>250,000</td><td class="cn rv">85%</td><td>236,104</td><td>250,000</td><td class="cn rv">94%</td><td>127,425</td><td>150,000</td><td class="cn rv">85%</td><td class="peek">4</td></tr>
<tr><th class="rh">48</th><td class="wk">W25</td><td class="pch">19-Jun</td><td class="pch">25-Jun</td><td>168,831</td><td>150,000</td><td class="cn rv">113%</td><td>274,635</td><td>250,000</td><td class="cn rv">110%</td><td>304,907</td><td>250,000</td><td class="cn rv">122%</td><td>168,796</td><td>150,000</td><td class="cn rv">113%</td><td class="peek">6</td></tr>
<tr><th class="rh">49</th><td class="wk">W26</td><td class="pch">26-Jun</td><td class="pch">2-Jul</td><td>251,174</td><td>300,000</td><td class="cn rv">84%</td><td>413,177</td><td>500,000</td><td class="cn rv">83%</td><td>391,443</td><td>500,000</td><td class="cn rv">78%</td><td>303,477</td><td>300,000</td><td class="cn rv">101%</td><td class="peek">8</td></tr>
<tr><th class="rh">50</th><td class="wk">W27</td><td class="pch">3-Jul</td><td class="pch">9-Jul</td><td>135,825</td><td>150,000</td><td class="cn rv">91%</td><td>202,373</td><td>250,000</td><td class="cn rv">81%</td><td>191,059</td><td>250,000</td><td class="cn rv">76%</td><td>105,541</td><td>150,000</td><td class="cn rv">70%</td><td class="peek">3</td></tr>
<tr><th class="rh">51</th><td class="wk">W28</td><td class="pch">10-Jul</td><td class="pch">16-Jul</td><td>126,060</td><td>150,000</td><td class="cn rv">84%</td><td>179,223</td><td>250,000</td><td class="cn rv">72%</td><td>178,627</td><td>250,000</td><td class="cn rv">71%</td><td>129,835</td><td>150,000</td><td class="cn rv">87%</td><td class="peek">4</td></tr>
<tr><th class="rh">52</th><td class="wk">W29</td><td class="pch">17-Jul</td><td class="pch">23-Jul</td><td>91,615</td><td>150,000</td><td class="cn rv">61%</td><td>159,182</td><td>250,000</td><td class="cn rv">64%</td><td>147,854</td><td>250,000</td><td class="cn rv">59%</td><td>90,499</td><td>150,000</td><td class="cn rv">60%</td><td class="peek">5</td></tr>
<tr><th class="rh">53</th><td class="wk">W30</td><td class="pch">24-Jul</td><td class="pch">30-Jul</td><td>99,386</td><td>150,000</td><td class="cn rv">66%</td><td>155,544</td><td>250,000</td><td class="cn rv">62%</td><td>165,400</td><td>250,000</td><td class="cn rv">66%</td><td>79,803</td><td>150,000</td><td class="cn rv">53%</td><td class="peek">5</td></tr>
<tr><th class="rh">54</th><td class="wk">W31</td><td class="pch">31-Jul</td><td class="pch">6-Aug</td><td>116,088</td><td>100,000</td><td class="cn rv">116%</td><td>180,819</td><td>175,000</td><td class="cn rv">103%</td><td>159,708</td><td>170,000</td><td class="cn rv">94%</td><td>106,775</td><td>100,000</td><td class="cn rv">107%</td><td class="peek">5</td></tr>
<tr><th class="rh">55</th><td class="wk">W32</td><td class="pch">7-Aug</td><td class="pch">13-Aug</td><td class="dash">-</td><td>100,000</td><td class="cn rv">0%</td><td class="dash">-</td><td>175,000</td><td class="cn rv">0%</td><td class="dash">-</td><td>170,000</td><td class="cn rv">0%</td><td class="dash">-</td><td>100,000</td><td class="cn rv">0%</td><td></td></tr>
<tr><th class="rh">56</th><td class="wk">W33</td><td class="pch">14-Aug</td><td class="pch">20-Aug</td><td class="dash">-</td><td>100,000</td><td class="cn rv">0%</td><td class="dash">-</td><td>175,000</td><td class="cn rv">0%</td><td class="dash">-</td><td>170,000</td><td class="cn rv">0%</td><td class="dash">-</td><td>100,000</td><td class="cn rv">0%</td><td></td></tr>
<tr><th class="rh">57</th><td class="wk">W34</td><td class="pch">21-Aug</td><td class="pch">27-Aug</td><td class="dash">-</td><td>100,000</td><td class="cn rv">0%</td><td class="dash">-</td><td>175,000</td><td class="cn rv">0%</td><td class="dash">-</td><td>170,000</td><td class="cn rv">0%</td><td class="dash">-</td><td>100,000</td><td class="cn rv">0%</td><td></td></tr>
<tr><th class="rh">58</th><td class="wk">W35</td><td class="pch">28-Aug</td><td class="pch">3-Sep</td><td class="dash">-</td><td>100,000</td><td class="cn rv">0%</td><td class="dash">-</td><td>175,000</td><td class="cn rv">0%</td><td class="dash">-</td><td>170,000</td><td class="cn rv">0%</td><td class="dash">-</td><td>100,000</td><td class="cn rv">0%</td><td></td></tr>
<tr><th class="rh">59</th><td class="wk">W36</td><td class="pch">4-Sep</td><td class="pch">10-Sep</td><td></td><td></td><td class="cn rv err">#DIV/0!</td><td></td><td></td><td class="cn rv err">#DIV/0!</td><td></td><td></td><td class="cn rv err">#DIV/0!</td><td></td><td></td><td class="cn rv err">#DIV/0!</td><td></td></tr>
</tbody>
</table>
</div>
<div class="vs"><div class="vs-in">
<div class="sb"><svg><use href="#tu"/></svg></div>
<div class="vthumb"></div>
<div class="sb vend"><svg><use href="#td"/></svg></div>
</div></div>
</div>

<div class="sheetbar">
<div class="navz stab"><svg fill="#217346"><use href="#tl"/></svg><span class="s22"></span><svg fill="#217346"><use href="#tr"/></svg><span class="s22"></span><span class="gdots">...</span></div>
<div class="stab sp pe-1">Cairo Area</div>
<div class="stab sp">Alex Area</div>
<div class="stab sp">Stores rank.</div>
<div class="stab sp">LFL</div>
<div></div>
<div class="stab s-ads">ADS</div>
<div></div>
<div class="stab s-act">Weekly Sales - Target Analysis</div>
<div class="stab sp">B2B - YTD</div>
<div class="stab sp">Closed Branches</div>
<div class="stail">
<span class="s22"></span><span class="gdots">...</span><span class="s16"></span>
<svg width="16" height="16" viewBox="0 0 16 16"><circle cx="8" cy="8" r="7.300" fill="none" stroke="#888"/><path d="M8 4V12M4 8H12" stroke="#777" stroke-width="1.300"/></svg>
<span class="s18"></span>
<svg width="3" height="11" viewBox="0 0 3 11"><path d="M1.500 0V2M1.500 4.500V6.500M1.500 9V11" stroke="#aaa" stroke-width="2"/></svg>
<span class="s16"></span>
<div class="hs"><div class="sb"><svg fill="#666"><use href="#tl"/></svg></div><div class="hthumb"></div><div class="sb hend"><svg fill="#666"><use href="#tr"/></svg></div></div>
</div>
</div>

<div class="statusb">
<span>Ready</span><span class="s16"></span><span class="s8"></span>
<svg width="15" height="14" viewBox="0 0 15 14"><path d="M.5.5H14.500V4H.5ZM.5 4V13.500H7M2.500 7H6M2.500 10H6" fill="none" stroke="#555"/><circle cx="11" cy="10" r="3.300" fill="none" stroke="#555"/><circle cx="11" cy="10" r="1.500" fill="#555"/></svg>
<div class="sviews">
<div class="vw on"><svg width="19" height="15" viewBox="0 0 19 15"><path d="M.5.5H18.500V14.500H.5ZM6.500.5V14.500M12.500.5V14.500M.5 5.200H18.500M.5 9.800H18.500" fill="none" stroke="#555"/></svg></div>
<div class="vw"><svg width="14" height="13" viewBox="0 0 14 13"><path d="M.5.5H13.500V12.500H.5ZM3.500 3.500H10.500M3.500 6.500H10.500M3.500 9.500H10.500" fill="none" stroke="#444"/></svg></div>
<div class="vw"><svg width="14" height="13" viewBox="0 0 14 13"><path d="M.5.5H13.500V12.500H.5ZM6.500.5V6.500H13.500" fill="none" stroke="#444"/></svg></div>
<span class="s5"></span>
<svg width="10" height="3" viewBox="0 0 10 3"><path d="M0 1.500H10" stroke="#444" stroke-width="1.200"/></svg>
<span class="s4"></span><div class="slid"></div><span class="s4"></span>
<svg width="11" height="11" viewBox="0 0 11 11"><path d="M0 5.500H11M5.500 0V11" stroke="#444" stroke-width="1.100"/></svg>
<span class="s11"></span><span class="pctz">100%</span>
</div>
</div>

<div class="wmark" dir="rtl" lang="ar">خمسات</div>
</body>
</html>
